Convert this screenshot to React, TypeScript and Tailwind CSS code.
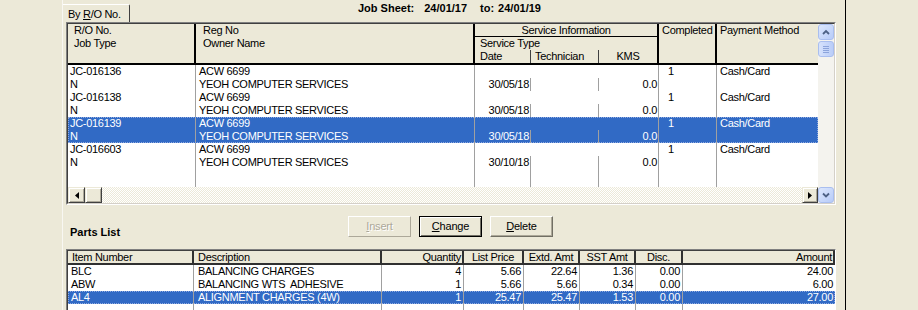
import React from "react";

type Job = {
  ro: string;
  type: string;
  reg: string;
  owner: string;
  date: string;
  kms: string;
  done: string;
  pay: string;
};

const jobs: Job[] = [
  { ro: "JC-016136", type: "N", reg: "ACW 6699", owner: "YEOH COMPUTER SERVICES", date: "30/05/18", kms: "0.0", done: "1", pay: "Cash/Card" },
  { ro: "JC-016138", type: "N", reg: "ACW 6699", owner: "YEOH COMPUTER SERVICES", date: "30/05/18", kms: "0.0", done: "1", pay: "Cash/Card" },
  { ro: "JC-016139", type: "N", reg: "ACW 6699", owner: "YEOH COMPUTER SERVICES", date: "30/05/18", kms: "0.0", done: "1", pay: "Cash/Card" },
  { ro: "JC-016603", type: "N", reg: "ACW 6699", owner: "YEOH COMPUTER SERVICES", date: "30/10/18", kms: "0.0", done: "1", pay: "Cash/Card" },
];
const selectedJob = 2;

const parts = [
  { item: "BLC", desc: "BALANCING CHARGES", qty: "4", price: "5.66", extd: "22.64", sst: "1.36", disc: "0.00", amt: "24.00" },
  { item: "ABW", desc: "BALANCING WTS  ADHESIVE", qty: "1", price: "5.66", extd: "5.66", sst: "0.34", disc: "0.00", amt: "6.00" },
  { item: "AL4", desc: "ALIGNMENT CHARGES (4W)", qty: "1", price: "25.47", extd: "25.47", sst: "1.53", disc: "0.00", amt: "27.00" },
];
const selectedPart = 2;

// column layout of the parts grid
const partCols = [
  { key: "item", w: "w-[126px]", head: "Item Number", hc: "pl-[4px]", bc: "pl-[3px]" },
  { key: "desc", w: "w-[188px]", head: "Description", hc: "pl-[4px]", bc: "pl-[4px]" },
  { key: "qty", w: "w-[82px]", head: "Quantity", hc: "text-right pr-[1px]", bc: "text-right pr-[2px]" },
  { key: "price", w: "w-[60px]", head: "List Price", hc: "text-center", bc: "text-right pr-[2px]" },
  { key: "extd", w: "w-[56px]", head: "Extd. Amt", hc: "text-center", bc: "text-right pr-[2px]" },
  { key: "sst", w: "w-[56px]", head: "SST Amt", hc: "text-center", bc: "text-right pr-[2px]" },
  { key: "disc", w: "w-[47px]", head: "Disc.", hc: "text-center", bc: "text-right pr-[2px]" },
  { key: "amt", w: "flex-1", head: "Amount", hc: "text-right pr-[1px]", bc: "text-right pr-[2px]" },
] as const;

const line = "border-r border-r-[#A0A0A0]";
const raised =
  "bg-[#ECE9D8] border border-t-[#ECE9D8] border-l-[#ECE9D8] border-b-[#404040] border-r-[#404040] shadow-[inset_1px_1px_0_#fff,inset_-1px_-1px_0_#ACA899]";
const selRow = "bg-[#316AC5] text-white outline-1 outline-dotted outline-[#8FAAE0] -outline-offset-1";

function XpScrollButton({ up }: { up: boolean }) {
  return (
    <div className="h-[16px] w-[16px] rounded-[3px] border border-[#A9BEEF] bg-[linear-gradient(135deg,#DCE7FD,#B7CBF8)] flex items-center justify-center shrink-0">
      <svg width="8" height="6" viewBox="0 0 8 6">
        <path
          d={up ? "M1 5 L4 2 L7 5" : "M1 1.5 L4 4.5 L7 1.5"}
          stroke="#4D6185"
          strokeWidth="1.8"
          fill="none"
        />
      </svg>
    </div>
  );
}

function WinButton({ label, hot, disabled, isDefault }: { label: string; hot: string; disabled?: boolean; isDefault?: boolean }) {
  const rest = label.slice(1);
  if (disabled) {
    return (
      <div className="w-[63px] h-[21px] flex items-center justify-center border border-t-white border-l-white border-b-[#ACA899] border-r-[#ACA899] text-[#ACA899] [text-shadow:1px_1px_0_#fff]">
        <span>
          <u>{hot}</u>
          {rest}
        </span>
      </div>
    );
  }
  return (
    <div
      className={`w-[63px] h-[21px] flex items-center justify-center ${
        isDefault
          ? "border border-black shadow-[inset_1px_1px_0_#fff,inset_-1px_-1px_0_#716F64]"
          : "border border-t-white border-l-white border-b-[#716F64] border-r-[#716F64] shadow-[inset_-1px_-1px_0_#ACA899]"
      }`}
    >
      <span>
        <u>{hot}</u>
        {rest}
      </span>
    </div>
  );
}

function JobRow({ j, sel }: { j: Job; sel: boolean }) {
  return (
    <div className={`flex h-[26px] shrink-0 ${sel ? selRow : ""}`}>
      <div className={`w-[128px] ${line} pl-[2px]`}>
        <div>{j.ro}</div>
        <div>{j.type}</div>
      </div>
      <div className={`w-[279px] ${line} pl-[3px] whitespace-nowrap overflow-hidden`}>
        <div>{j.reg}</div>
        <div>{j.owner}</div>
      </div>
      <div className={`w-[184px] ${line} flex flex-col`}>
        <div className="h-[13px]" />
        <div className="flex h-[13px]">
          <div className={`w-[56px] ${line} text-right pr-[1px]`}>{j.date}</div>
          <div className={`w-[68px] ${line}`} />
          <div className="flex-1 text-right pr-[1px]">{j.kms}</div>
        </div>
      </div>
      <div className={`w-[58px] ${line} pl-[9px]`}>{j.done}</div>
      <div className="flex-1 pl-[3px]">{j.pay}</div>
    </div>
  );
}

export default function App() {
  return (
    <div className="w-[918px] h-[310px] overflow-hidden bg-[#ECE9D8] flex font-['Liberation_Sans',Arial,sans-serif] text-[11px] leading-[13px] text-black">
      <div className="ml-[62px] w-[784px] h-full border-l border-l-[#F8F7F2] border-r border-r-black flex flex-col">
        {/* --- tab + title --- */}
        <div className="flex h-[22px] shrink-0">
          <div className="mt-[4px] h-[18px] w-[67px] border-t border-t-white border-r border-r-[#404040] rounded-tr-[2px] pl-[5px] pt-[3px] tracking-[-0.3px] whitespace-nowrap">
            By <u>R</u>/O No.
          </div>
          <div className="ml-[228px] mt-[2px] font-bold flex whitespace-nowrap">
            <span>Job Sheet:</span>
            <span className="ml-[10px]">24/01/17</span>
            <span className="ml-[13px]">to:</span>
            <span className="ml-[4px]">24/01/19</span>
          </div>
        </div>

        {/* --- job grid --- */}
        <div className="ml-[3px] w-[770px] h-[183px] shrink-0 border border-t-[#808080] border-l-[#808080] border-b-white border-r-white">
          <div className="h-full border border-t-[#404040] border-l-[#404040] border-b-[#D4D0C8] border-r-[#D4D0C8] flex tracking-[-0.3px]">
            <div className="w-[750px] flex flex-col">
              {/* header */}
              <div className="flex h-[41px] shrink-0 bg-[#ECE9D8] border-b-2 border-b-black">
                <div className="w-[128px] border-r-2 border-r-black pl-[6px]">
                  <div>R/O No.</div>
                  <div>Job Type</div>
                </div>
                <div className="w-[279px] border-r-2 border-r-black pl-[7px]">
                  <div>Reg No</div>
                  <div>Owner Name</div>
                </div>
                <div className="w-[184px] border-r-2 border-r-black flex flex-col">
                  <div className="h-[13px] leading-[12px] text-center border-b border-b-black">Service Information</div>
                  <div className="h-[13px] pl-[5px]">Service Type</div>
                  <div className="h-[13px] flex">
                    <div className="w-[56px] pl-[5px] border-r border-r-[#404040]">Date</div>
                    <div className="w-[68px] pl-[4px] border-r border-r-[#404040]">Technician</div>
                    <div className="flex-1 text-center">KMS</div>
                  </div>
                </div>
                <div className="w-[58px] border-r-2 border-r-black pl-[3px]">Completed</div>
                <div className="flex-1 pl-[3px] whitespace-nowrap">Payment Method</div>
              </div>

              {/* body */}
              <div className="h-[122px] shrink-0 bg-white flex flex-col">
                {jobs.map((j, i) => (
                  <JobRow key={j.ro} j={j} sel={i === selectedJob} />
                ))}
                <div className="flex-1 flex">
                  <div className={`w-[128px] ${line}`} />
                  <div className={`w-[279px] ${line}`} />
                  <div className={`w-[184px] ${line} flex`}>
                    <div className={`w-[56px] ${line}`} />
                    <div className={`w-[68px] ${line}`} />
                  </div>
                  <div className={`w-[58px] ${line}`} />
                  <div className="flex-1" />
                </div>
              </div>

              {/* horizontal scrollbar */}
              <div className="h-[16px] shrink-0 flex">
                <div className={`w-[17px] ${raised} flex items-center justify-center`}>
                  <svg width="4" height="7" viewBox="0 0 4 7">
                    <path d="M4 0 L0 3.5 L4 7 Z" fill="#000" />
                  </svg>
                </div>
                <div className={`w-[17px] ${raised}`} />
                <div className="flex-1 bg-[image:repeating-conic-gradient(#fff_0_25%,#ECE9D8_0_50%)] bg-[length:2px_2px]" />
                <div className={`w-[16px] ${raised} flex items-center justify-center`}>
                  <svg width="4" height="7" viewBox="0 0 4 7">
                    <path d="M0 0 L4 3.5 L0 7 Z" fill="#000" />
                  </svg>
                </div>
              </div>
            </div>

            {/* vertical scrollbar */}
            <div className="flex-1 flex flex-col bg-[#F4F3EE]">
              <XpScrollButton up />
              <div className="mt-[1px] h-[16px] w-[16px] rounded-[3px] border border-[#A9BEEF] bg-[linear-gradient(90deg,#D6E2FC,#BACDF8)] flex flex-col items-center justify-center gap-[1px] shrink-0">
                <div className="w-[6px] h-[1px] bg-[#8CA4DB]" />
                <div className="w-[6px] h-[1px] bg-[#8CA4DB]" />
                <div className="w-[6px] h-[1px] bg-[#8CA4DB]" />
                <div className="w-[6px] h-[1px] bg-[#8CA4DB]" />
              </div>
              <div className="flex-1" />
              <XpScrollButton up={false} />
            </div>
          </div>
        </div>

        {/* --- parts list label + buttons --- */}
        <div className="flex h-[44px] shrink-0">
          <div className="w-[285px] pl-[7px] pt-[21px] font-bold">Parts List</div>
          <div className="flex gap-[8px] pt-[11px] tracking-[-0.2px]">
            <WinButton label="Insert" hot="I" disabled />
            <WinButton label="Change" hot="C" isDefault />
            <WinButton label="Delete" hot="D" />
          </div>
        </div>

        {/* --- parts grid --- */}
        <div className="ml-[3px] w-[770px] flex-1 border-l border-t border-r border-l-[#808080] border-t-[#808080] border-r-white">
          <div className="h-full border-l border-t border-l-[#404040] border-t-[#404040] bg-white flex flex-col tracking-[-0.3px]">
            <div className="flex h-[14px] shrink-0 bg-[#ECE9D8] border-b-2 border-b-[#303030] leading-[12px]">
              {partCols.map((c) => (
                <div key={c.key} className={`${c.w} border-r-2 border-r-[#303030] ${c.hc} whitespace-nowrap`}>
                  {c.head}
                </div>
              ))}
            </div>
            {parts.map((p, i) => (
              <div key={p.item} className={`flex h-[13px] shrink-0 ${i === selectedPart ? selRow : ""}`}>
                {partCols.map((c, k) => (
                  <div
                    key={c.key}
                    className={`${c.w} ${k < partCols.length - 1 ? line : ""} ${c.bc} whitespace-pre overflow-hidden`}
                  >
                    {p[c.key]}
                  </div>
                ))}
              </div>
            ))}
            <div className="flex-1 flex">
              {partCols.map((c, k) => (
                <div key={c.key} className={`${c.w} ${k < partCols.length - 1 ? line : ""}`} />
              ))}
            </div>
          </div>
        </div>
      </div>
    </div>
  );
}
